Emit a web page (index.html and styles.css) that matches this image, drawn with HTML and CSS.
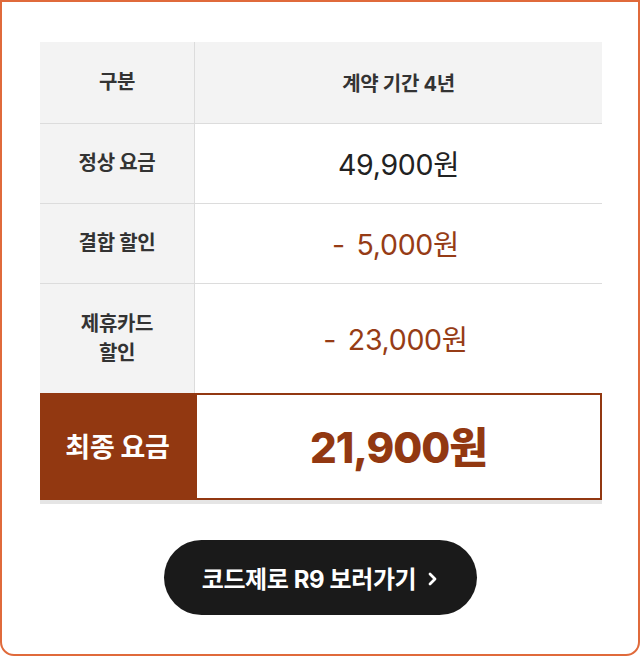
FILE: index.html
```html
<!DOCTYPE html>
<html lang="ko">
<head>
<meta charset="utf-8">
<link rel="stylesheet" href="styles.css">
</head>
<body>
<div class="card">
  <div class="table">
    <div class="cell label head">구분</div>
    <div class="cell head-val head">계약 기간 4년</div>

    <div class="cell label">정상 요금</div>
    <div class="cell value price">49,900원</div>

    <div class="cell label">결합 할인</div>
    <div class="cell value discount">- 5,000원</div>

    <div class="cell label tall">제휴카드<br>할인</div>
    <div class="cell value discount tall">- 23,000원</div>

    <div class="final-label">최종 요금</div>
    <div class="final-value">21,900원</div>
  </div>
  <div class="btn-wrap">
    <a class="btn" href="#">코드제로 R9 보러가기
      <svg class="chev" width="11" height="14" viewBox="0 0 11 14"><path d="M3 2 L8 7 L3 12" fill="none" stroke="#fff" stroke-width="2.8" stroke-linecap="round" stroke-linejoin="round"/></svg>
    </a>
  </div>
</div>
</body>
</html>
```

FILE: styles.css
```css
* { box-sizing: border-box; }
html, body { margin: 0; padding: 0; background: #fff; }
body {
  font-family: Inter, "Noto Sans CJK KR", sans-serif;
  width: 640px;
  height: 656px;
  overflow: hidden;
}
.card {
  width: 640px;
  height: 656px;
  border: 2px solid #e06a3b;
  border-radius: 0 0 14px 14px;
  padding: 40px 0 0 38px;
  background: #fff;
}
.table {
  width: 562px;
  display: grid;
  grid-template-columns: 155px 1fr;
  border-bottom: 4px solid #e5e5e5;
}
.cell {
  height: 80px;
  border-bottom: 1px solid #dcdcdc;
  display: flex;
  align-items: center;
  justify-content: center;
  text-align: center;
}
.cell.head { height: 82px; }
.cell.tall { height: 109px; border-bottom: none; }
.label {
  background: #f3f3f3;
  border-right: 1px solid #dcdcdc;
  font-size: 20px;
  font-weight: 700;
  color: #333;
  line-height: 29px;
  letter-spacing: -0.3px;
}
.head-val {
  background: #f3f3f3;
  font-size: 20px;
  font-weight: 700;
  color: #333;
  letter-spacing: -0.3px;
}
.value { font-size: 28.5px; letter-spacing: -0.3px; padding-bottom: 2px; }
.price { color: #222; }
.discount { color: #963c16; word-spacing: 4px; padding-right: 6px; }
.final-label {
  height: 107px;
  background: #923811;
  color: #fff;
  font-size: 27px;
  font-weight: 700;
  display: flex;
  align-items: center;
  justify-content: center;
  letter-spacing: -0.3px;
  padding-bottom: 2px;
}
.final-value {
  height: 107px;
  border: 2px solid #923811;
  color: #923811;
  font-size: 42px;
  font-weight: 800;
  display: flex;
  align-items: center;
  justify-content: center;
  letter-spacing: -1px;
  padding-bottom: 4px;
}
.btn-wrap {
  display: flex;
  justify-content: center;
  margin-top: 36px;
  margin-left: -38px;
}
.btn {
  width: 313px;
  height: 75px;
  border-radius: 38px;
  background: #1a1a1a;
  color: #fff;
  text-decoration: none;
  font-size: 24px;
  font-weight: 700;
  letter-spacing: -0.4px;
  display: flex;
  align-items: center;
  justify-content: center;
  gap: 11px;
}
.chev { margin-top: 2px; }
```
